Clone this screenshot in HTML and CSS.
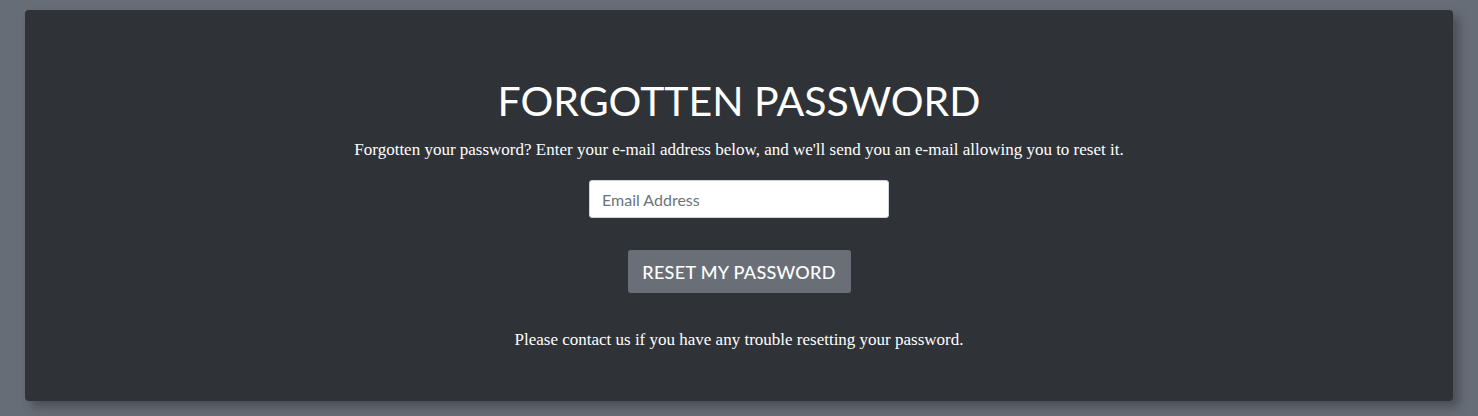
FILE: index.html
```html
<!DOCTYPE html>
<html lang="en">
<head>
<meta charset="utf-8">
<title>Forgotten Password</title>
<link rel="stylesheet" href="styles.css">
</head>
<body>
<main class="card">
  <h1 class="title">FORGOTTEN PASSWORD</h1>
  <p class="lead">Forgotten your password? Enter your e-mail address below, and we'll send you an e-mail allowing you to reset it.</p>
  <form class="form">
    <input class="email" type="email" placeholder="Email Address">
    <button class="btn" type="button">RESET MY PASSWORD</button>
  </form>
  <p class="note">Please contact us if you have any trouble resetting your password.</p>
</main>
</body>
</html>
```
FILE: styles.css
```css
html, body {
  margin: 0;
  padding: 0;
  background: #676d76;
  height: 416px;
  overflow: hidden;
}
body {
  padding: 10px 25px 0 25px;
  box-sizing: border-box;
}
.card {
  background: #2f3338;
  border-radius: 4px;
  height: 391px;
  box-sizing: border-box;
  box-shadow: 6px 6px 10px rgba(40, 44, 50, 0.45);
  display: flex;
  flex-direction: column;
  align-items: center;
  padding-top: 66px;
  color: #fff;
}
.title {
  margin: 0;
  font-family: Lato, "Open Sans", sans-serif;
  font-weight: 400;
  font-size: 41px;
  line-height: 50px;
  letter-spacing: 0;
}
.lead {
  margin: 13px 0 0;
  font-family: "Liberation Serif", serif;
  font-size: 17px;
  line-height: 22px;
}
.form {
  display: flex;
  flex-direction: column;
  align-items: center;
  margin-top: 19px;
}
.email {
  width: 300px;
  height: 38px;
  box-sizing: border-box;
  border: 1px solid #ced4da;
  border-radius: 3px;
  padding: 0 12px;
  font-family: Lato, "Open Sans", sans-serif;
  font-size: 16px;
  color: #495057;
  background: #fff;
}
.email::placeholder {
  color: #6c737b;
}
.btn {
  margin-top: 32px;
  width: 223px;
  height: 43px;
  border: 0;
  border-radius: 3px;
  background: #6a6f77;
  color: #fff;
  font-family: Lato, "Open Sans", sans-serif;
  font-size: 18px;
  font-weight: 500;
  letter-spacing: 0.3px;
}
.note {
  margin: 36px 0 0;
  font-family: "Liberation Serif", serif;
  font-size: 17px;
  line-height: 22px;
}
```
